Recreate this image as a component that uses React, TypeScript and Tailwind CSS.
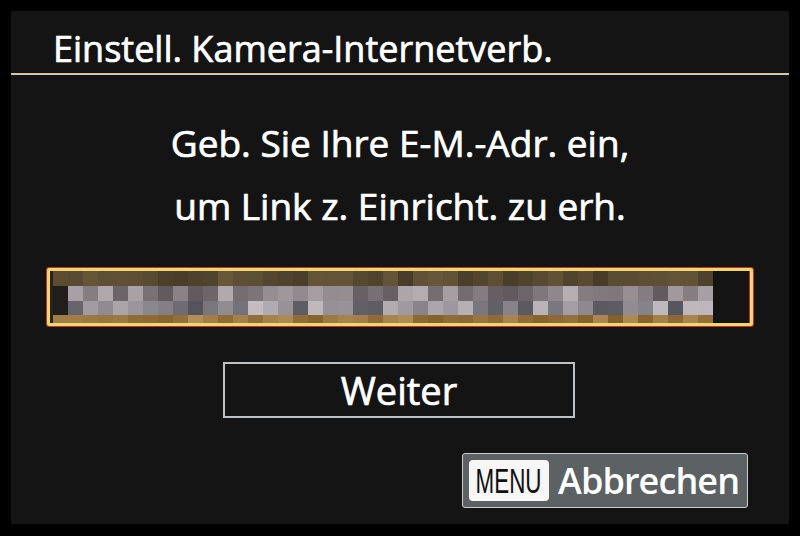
import React from "react";

const COLS = 44;

function seeded(seed: number) {
  let s = seed;
  return () => {
    s = (s * 1103515245 + 12345) % 2147483648;
    return s / 2147483648;
  };
}

function mix(a: number[], b: number[], t: number) {
  const c = a.map((v, i) => Math.round(v + (b[i] - v) * t));
  return `rgb(${c[0]}, ${c[1]}, ${c[2]})`;
}

const rnd = seeded(42);
const mosaicRows = [
  { lo: [72, 60, 40], hi: [104, 88, 58] },
  { lo: [96, 88, 92], hi: [182, 174, 178] },
  { lo: [84, 82, 90], hi: [196, 190, 194] },
  { lo: [132, 96, 44], hi: [178, 142, 88] },
].map((row, r) =>
  Array.from({ length: COLS }, (_, c) => {
    if (c === 0 && (r === 1 || r === 2)) return "rgb(32, 30, 28)";
    return mix(row.lo, row.hi, rnd());
  })
);
const rowHeights = [16, 15, 15, 8];

export default function App() {
  return (
    <div
      className="w-[800px] h-[536px] bg-black pt-[11px] pb-[12px] px-[11px]"
      style={{ fontFamily: '"Open Sans", "Noto Sans", sans-serif' }}
    >
      <div className="h-full bg-[#141414] flex flex-col">
        {/* Title */}
        <div className="pt-[20px] pl-[42px] pb-[6px] text-[36px] leading-[36px] text-white [-webkit-text-stroke:0.7px_white]">
          Einstell. Kamera-Internetverb.
        </div>
        <div className="h-[2px] bg-[#c9ccd0] border-t border-[#d8c48a]" />

        {/* Message */}
        <div className="mt-[36px] text-center text-[37px] leading-[63px] text-white [-webkit-text-stroke:0.7px_white]">
          <p>Geb. Sie Ihre E-M.-Adr. ein,</p>
          <p>um Link z. Einricht. zu erh.</p>
        </div>

        {/* Input field (blurred address) */}
        <div className="mt-[31px] mx-[36px] h-[58px] border-[3px] border-[#f2d477] rounded-[2px] shadow-[0_0_0_1px_#b83a22] flex items-stretch">
          <div className="w-[3px] bg-[#2a2418]" />
          <div className="flex flex-col">
            {mosaicRows.map((row, r) => (
              <div key={r} className="flex" style={{ height: rowHeights[r] }}>
                {row.map((col, c) => (
                  <div key={c} className="w-[15px]" style={{ backgroundColor: col }} />
                ))}
              </div>
            ))}
          </div>
          <div className="flex-1 border-r border-[#c0302a]" />
        </div>

        {/* Weiter */}
        <div className="mt-[36px] flex justify-center pr-[2px]">
          <div className="w-[352px] h-[56px] border-2 border-[#bcc2c6] flex items-center justify-center text-[38px] text-white [-webkit-text-stroke:0.7px_white]">
            Weiter
          </div>
        </div>

        {/* Cancel */}
        <div className="mt-[35px] flex justify-end pr-[41px]">
          <div className="h-[55px] w-[286px] bg-[#5c6163] border border-[#c8cccc] rounded-[3px] flex items-center pl-[6px] gap-[9px]">
            <div className="h-[41px] w-[80px] bg-[#f6f6f6] rounded-[4px] flex items-center justify-center overflow-hidden">
              <span
                className="inline-block text-[35px] text-[#111] leading-none scale-x-[0.64]"
                style={{ fontFamily: '"Liberation Sans", Arial, sans-serif' }}
              >
                MENU
              </span>
            </div>
            <span className="text-[36px] text-white font-semibold leading-none tracking-[-0.9px]">Abbrechen</span>
          </div>
        </div>
      </div>
    </div>
  );
}
